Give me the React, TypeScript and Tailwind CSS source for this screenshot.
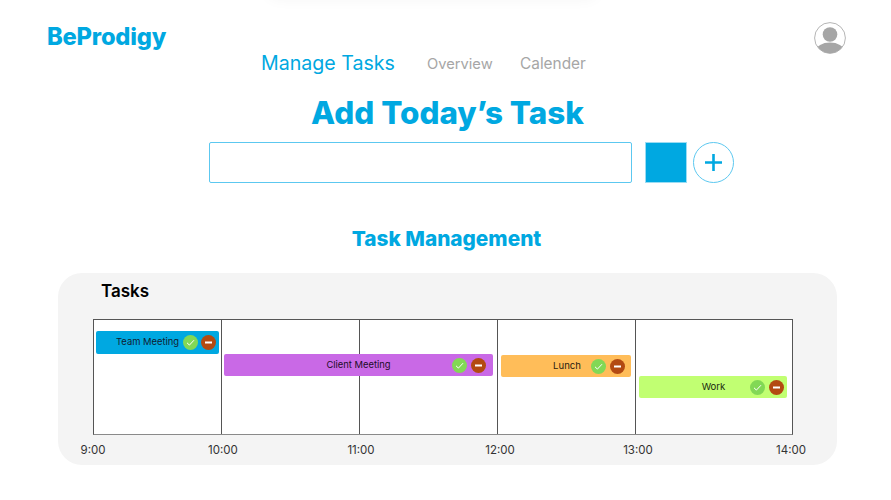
import React from 'react';

function TaskActions({ tight = false }: { tight?: boolean }) {
  return (
    <span className={tight ? 'flex items-center gap-[3px]' : 'flex items-center gap-[4px]'}>
      <svg width="15" height="15" viewBox="0 0 15 15">
        <circle cx="7.5" cy="7.5" r="7.5" fill="#82d855" />
        <path d="M4 7.8l2.4 2.3L11 5.2" fill="none" stroke="#fff" strokeWidth="1" />
      </svg>
      <svg width="15" height="15" viewBox="0 0 15 15">
        <circle cx="7.5" cy="7.5" r="7.5" fill="#b34a12" />
        <rect x="4" y="6.5" width="7" height="2" fill="#fff" />
      </svg>
    </span>
  );
}

export default function App() {
  return (
    <div className="relative w-[891px] h-[500px] overflow-hidden bg-white font-['Inter',sans-serif]">
      {/* faint shadow of something cut off at the top */}
      <div className="absolute left-[265px] top-[-30px] w-[335px] h-[30px] rounded-full shadow-[0_0_14px_rgba(0,0,0,0.04)]" />

      {/* Header */}
      <header className="flex justify-between pl-[47px] pr-[45px] pt-[22px] h-[48px]">
        <div className="text-[23.7px] leading-[30px] font-extrabold text-[#00a8e1] tracking-[-0.2px]">BeProdigy</div>
        <svg width="32" height="32" viewBox="0 0 32 32">
          <defs>
            <clipPath id="avatar">
              <circle cx="16" cy="16" r="15.2" />
            </clipPath>
          </defs>
          <circle cx="16" cy="16" r="15.4" fill="#fff" stroke="#b5b5b5" strokeWidth="1" />
          <circle cx="16" cy="12.5" r="7.3" fill="#a6a6a6" />
          <ellipse cx="16" cy="29" rx="14" ry="8.5" fill="#a6a6a6" clipPath="url(#avatar)" />
        </svg>
      </header>

      {/* Nav */}
      <nav className="flex items-center pl-[261px] h-[30px] mt-[1px]">
        <span className="w-[166px] text-[19.6px] text-[#00a8e1]">Manage Tasks</span>
        <span className="w-[93px] text-[14.7px] text-[#a6a6a6]">Overview</span>
        <span className="text-[15.4px] text-[#a6a6a6]">Calender</span>
      </nav>

      <h1 className="mt-[15px] h-[38px] pl-[4px] text-center text-[31.4px] leading-[38px] font-extrabold text-[#00a8e1]">
        Add Today’s Task
      </h1>

      {/* Add task form */}
      <div className="flex items-start pl-[209px] mt-[10px]">
        <div className="w-[423px] h-[41px] rounded-[2px] border border-[#5cc8f0] bg-white" />
        <div className="ml-[13px] w-[42px] h-[41px] bg-[#00a8e1] border border-[#9adcf3]" />
        <div className="ml-[6px] w-[41px] h-[41px] rounded-full border border-[#5cc8f0] flex items-center justify-center">
          <svg width="19" height="19" viewBox="0 0 19 19">
            <path d="M9.5 1v17M1 9.5h17" stroke="#00a8e1" strokeWidth="2.6" />
          </svg>
        </div>
      </div>

      <h2 className="mt-[43px] h-[26px] pl-[2px] text-center text-[20.8px] leading-[26px] font-extrabold text-[#00a8e1]">
        Task Management
      </h2>

      {/* Panel */}
      <section className="ml-[58px] mt-[21px] w-[779px] h-[192px] rounded-[24px] bg-[#f4f4f4] pl-[35px] pt-[8px]">
        <div className="pl-[8px] h-[20px] text-[17px] leading-[20px] font-semibold text-black">Tasks</div>

        <div className="mt-[18px] w-[700px] h-[116px] border border-[#555] border-b-[#8a8a8a] bg-white grid grid-cols-[128px_138px_138px_138px_156px] grid-rows-[11px_23px_22px_23px_1fr]">
          <div className="col-start-1 row-start-1 row-span-5 border-r border-[#555]" />
          <div className="col-start-2 row-start-1 row-span-5 border-r border-[#555]" />
          <div className="col-start-3 row-start-1 row-span-5 border-r border-[#555]" />
          <div className="col-start-4 row-start-1 row-span-5 border-r border-[#555]" />

          <div className="col-start-1 row-start-2 ml-[2px] mr-[3px] rounded-[2px] bg-[#00a8e1] flex items-center pl-[20px] pr-[3px] justify-between">
            <span className="text-[9.4px] text-[#102030]">Team Meeting</span>
            <TaskActions tight />
          </div>
          <div className="col-start-2 col-span-2 row-start-3 ml-[2px] mr-[5px] rounded-[2px] bg-[#c969e6] flex items-center pr-[7px]">
            <span className="flex-1 pl-[41px] text-center text-[9.4px] text-[#1c0d26]">Client Meeting</span>
            <TaskActions />
          </div>
          <div className="col-start-4 row-start-3 ml-[3px] mr-[5px] mt-[1px] h-[22px] rounded-[2px] bg-[#ffbd59] flex items-center pr-[6px]">
            <span className="flex-1 pl-[42px] text-center text-[9.6px] text-[#2a2010]">Lunch</span>
            <TaskActions />
          </div>
          <div className="col-start-5 row-start-4 ml-[3px] mr-[5px] h-[22px] rounded-[2px] bg-[#c1ff72] flex items-center pr-[3px]">
            <span className="flex-1 pl-[38px] text-center text-[9.6px] text-[#1a2a10]">Work</span>
            <TaskActions />
          </div>
        </div>

        {/* Time axis */}
        <div className="flex mt-[7px] ml-[-20px] text-[11.5px] leading-[16px] text-[#333]">
          <span className="w-[40px] text-center">9:00</span>
          <span className="ml-[90px] w-[40px] text-center">10:00</span>
          <span className="ml-[98px] w-[40px] text-center">11:00</span>
          <span className="ml-[99px] w-[40px] text-center">12:00</span>
          <span className="ml-[98px] w-[40px] text-center">13:00</span>
          <span className="ml-[113px] w-[40px] text-center">14:00</span>
        </div>
      </section>
    </div>
  );
}
